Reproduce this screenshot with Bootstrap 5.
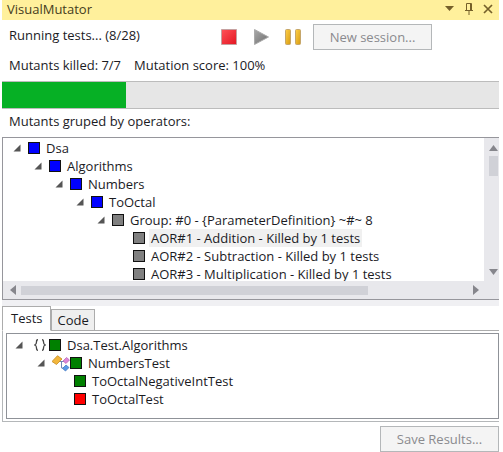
<!DOCTYPE html>
<html lang="en">
<head>
<meta charset="utf-8">
<meta name="viewport" content="width=device-width, initial-scale=1">
<title>VisualMutator</title>
<link rel="stylesheet" href="https://cdn.jsdelivr.net/npm/bootstrap@5.3.0/dist/css/bootstrap.min.css">
<style>
body { font-family: "Open Sans", "Noto Sans", sans-serif; font-size: 13px; line-height: 18px; color: #1b1b1f; background: #fff; }
.tool-window { padding: 0 4px 0 2px; }
.title-strip { background: #fff09c; height: 20px; padding: 0 2px 3px 5px; color: #453c20; }
.title-strip button { width: 19px; height: 17px; }
.toolbar-row { height: 33px; padding: 3px 67px 3px 7px; }
.tool-icons { gap: 16px; margin-right: 12px; }
.push-btn { --bs-btn-font-size: 13px; --bs-btn-line-height: 18px; --bs-btn-padding-y: 3px; --bs-btn-padding-x: 0; --bs-btn-border-radius: 0; --bs-btn-disabled-opacity: 1;
  --bs-btn-disabled-bg: #f4f4f4; --bs-btn-disabled-border-color: #b4b7b9; --bs-btn-disabled-color: #8a8a8e; width: 119px; }
.stats-row { height: 28px; padding: 2px 7px 6px; gap: 13px; }
.kill-bar { --bs-progress-height: 28px; --bs-progress-bg: #e6e6e6; --bs-progress-border-radius: 0; --bs-progress-bar-bg: #06b025; border: solid #bcbcbc; border-width: 1px 0; }
.tree-label { padding: 3px 7px 7px; }
.tree-frame { border: solid #96969c; border-width: 1px 0 1px 1px; }
.tree-view { height: 143px; padding: 1px 0 0 10px; }
.tree-view ul { padding-left: 21px; }
.node { height: 18px; white-space: nowrap; }
.expander { width: 8px; height: 8px; margin-right: 7px; flex: none; }
.leaf { padding-left: 15px; }
.state { width: 12px; height: 12px; border: 1px solid #111; flex: none; margin-right: 4px; }
.state-blue { background: #00f; } .state-gray { background: #808080; }
.state-green { background: #008000; } .state-red { background: #f00; }
.caption { padding: 0 2px; }
.caption-current { background: #f0f0f0; }
.vscroll { width: 15px; background: #e8e8ec; padding: 7px 1px 6px 5px; }
.vscroll-thumb { width: 9px; height: 20px; background: #d0d1d7; margin-top: 5px; }
.hscroll { height: 18px; background: #e8e8ec; padding: 0 20px 0 7px; }
.hscroll-thumb { width: 74%; height: 9px; background: #d0d1d7; margin-left: 5px; }
.split-strip { height: 6px; background: #f0f0f3; }
.result-tabs { --bs-nav-tabs-border-color: #acacac; --bs-nav-tabs-border-radius: 0; --bs-nav-tabs-link-active-border-color: #acacac; --bs-nav-tabs-link-active-color: #1b1b1f; }
.result-tabs .nav-link { padding: 1px 5px; color: #1b1b1f; font-size: 13px; line-height: 18px; border-color: #acacac; background: #efefef; }
.result-tabs .nav-link.active { padding: 2px 8px 3px; background: #fff; border-bottom-color: #fff; }
.tab-frame { border: solid #b4b7b9; border-width: 0 0 1px 1px; padding: 2px 0 2px 3px; }
.test-tree { border: 1px solid #8f9298; padding: 2px 0 10px 8px; }
.test-tree ul { padding-left: 22px; }
.namespace-mark { width: 12px; margin: 0 3px 0 4px; }
.save-row { padding-top: 4px; }
</style>
<script src="https://cdn.jsdelivr.net/npm/bootstrap@5.3.0/dist/js/bootstrap.bundle.min.js"></script>
</head>
<body>
<svg class="d-none" aria-hidden="true">
  <symbol id="open-arrow" viewBox="0 0 8 8"><path d="M7.5.5v7H.5z" fill="#555"/></symbol>
</svg>
<main class="tool-window">
  <header class="title-strip d-flex align-items-center">
    <span class="me-auto">VisualMutator</span>
    <button class="btn p-0 border-0 d-flex align-items-center justify-content-center" aria-label="Window menu"><svg width="9" height="5"><path d="M0 0h9L4.500 5z" fill="#75602a"/></svg></button>
    <button class="btn p-0 border-0 d-flex align-items-center justify-content-center" aria-label="Pin"><svg width="8" height="12" fill="none" stroke="#75602a"><path d="M1.500 7V.5h5V7M0 7.500h8M4 8v4M5.500 1v6"/></svg></button>
    <button class="btn p-0 border-0 d-flex align-items-center justify-content-center" aria-label="Close"><svg width="10" height="10"><path d="M1 1l8 8M9 1L1 9" stroke="#75602a" stroke-width="1.700"/></svg></button>
  </header>

  <div class="toolbar-row d-flex align-items-center">
    <span class="me-auto pb-1">Running tests... (8/28)</span>
    <div class="tool-icons d-flex align-items-center">
      <button class="btn p-0 border-0 d-flex" aria-label="Stop"><svg width="16" height="16"><defs><linearGradient id="rg" x2="1" y2="1"><stop stop-color="#ff5258"/><stop offset="1" stop-color="#e31522"/></linearGradient></defs><path d="M.5.5h15v15H.5z" fill="url(#rg)" stroke="#c5a0a0"/></svg></button>
      <button class="btn p-0 border-0 d-flex" aria-label="Run"><svg width="16" height="16"><defs><linearGradient id="gg" x2="1" y2="1"><stop stop-color="#aaa"/><stop offset="1" stop-color="#6c6c6c"/></linearGradient></defs><path d="M1.500.5L15.500 8 1.500 15.500z" fill="url(#gg)" stroke="#aaa"/></svg></button>
      <button class="btn p-0 border-0 d-flex" aria-label="Pause"><svg width="16" height="16"><defs><linearGradient id="yg" x2="1" y2="1"><stop stop-color="#ffd04a"/><stop offset="1" stop-color="#d69a10"/></linearGradient></defs><g fill="url(#yg)" stroke="#c5a66b"><rect x=".5" y=".5" width="5" height="15" rx="1"/><rect x="10.500" y=".5" width="5" height="15" rx="1"/></g></svg></button>
    </div>
    <button class="btn push-btn" disabled>New session...</button>
  </div>

  <div class="stats-row d-flex align-items-center">
    <span>Mutants killed: 7/7</span><span>Mutation score: 100%</span>
  </div>

  <div class="progress kill-bar" role="progressbar" aria-label="Tests run" aria-valuenow="25" aria-valuemin="0" aria-valuemax="100">
    <div class="progress-bar" style="width:25%"></div>
  </div>

  <div class="tree-label">Mutants gruped by operators:</div>

  <section class="tree-frame" aria-label="Mutants">
    <div class="d-flex">
      <div class="tree-view flex-grow-1 overflow-hidden">
        <div class="node d-flex align-items-center"><svg class="expander"><use href="#open-arrow"/></svg><i class="state state-blue"></i><span class="caption">Dsa</span></div>
        <ul class="list-unstyled mb-0"><li>
          <div class="node d-flex align-items-center"><svg class="expander"><use href="#open-arrow"/></svg><i class="state state-blue"></i><span class="caption">Algorithms</span></div>
          <ul class="list-unstyled"><li>
            <div class="node d-flex align-items-center"><svg class="expander"><use href="#open-arrow"/></svg><i class="state state-blue"></i><span class="caption">Numbers</span></div>
            <ul class="list-unstyled"><li>
              <div class="node d-flex align-items-center"><svg class="expander"><use href="#open-arrow"/></svg><i class="state state-blue"></i><span class="caption">ToOctal</span></div>
              <ul class="list-unstyled"><li>
                <div class="node d-flex align-items-center"><svg class="expander"><use href="#open-arrow"/></svg><i class="state state-gray"></i><span class="caption">Group: #0 - {ParameterDefinition} ~#~ 8</span></div>
                <ul class="list-unstyled">
                  <li class="node leaf d-flex align-items-center"><i class="state state-gray"></i><span class="caption caption-current">AOR#1 - Addition - Killed by 1 tests</span></li>
                  <li class="node leaf d-flex align-items-center"><i class="state state-gray"></i><span class="caption">AOR#2 - Subtraction - Killed by 1 tests</span></li>
                  <li class="node leaf d-flex align-items-center"><i class="state state-gray"></i><span class="caption">AOR#3 - Multiplication - Killed by 1 tests</span></li>
                </ul>
              </li></ul>
            </li></ul>
          </li></ul>
        </li></ul>
      </div>
      <div class="vscroll d-flex flex-column">
        <svg width="9" height="6"><path d="M4.500 0L9 6H0z" fill="#86868c"/></svg>
        <div class="vscroll-thumb"></div>
        <svg class="mt-auto" width="9" height="6"><path d="M0 0h9L4.500 6z" fill="#86868c"/></svg>
      </div>
    </div>
    <div class="hscroll d-flex align-items-center">
      <svg width="6" height="10"><path d="M6 0v10L0 5z" fill="#86868c"/></svg>
      <div class="hscroll-thumb"></div>
      <svg class="ms-auto" width="6" height="10"><path d="M0 0l6 5-6 5z" fill="#86868c"/></svg>
    </div>
  </section>
  <div class="split-strip"></div>

  <ul class="nav nav-tabs result-tabs align-items-end" role="tablist">
    <li class="nav-item" role="presentation"><button class="nav-link active" id="tests-tab" data-bs-toggle="tab" data-bs-target="#tests" role="tab" aria-controls="tests" aria-selected="true">Tests</button></li>
    <li class="nav-item" role="presentation"><button class="nav-link" id="code-tab" data-bs-toggle="tab" data-bs-target="#code" role="tab" aria-controls="code" aria-selected="false">Code</button></li>
  </ul>
  <div class="tab-content tab-frame">
    <div class="tab-pane active" id="tests" role="tabpanel" aria-labelledby="tests-tab">
      <div class="test-tree">
        <div class="node d-flex align-items-center"><svg class="expander"><use href="#open-arrow"/></svg><svg class="namespace-mark" height="12" viewBox="0 0 12 12" fill="none" stroke="#444" stroke-width="1.300"><path d="M4 .7C2.500.7 2.500 1.500 2.500 3S2.500 5.500.8 6c1.700.5 1.700 1.500 1.700 3s0 2.300 1.500 2.300M8 .7c1.500 0 1.500.8 1.500 2.300s0 2.500 1.700 3C9.500 6.500 9.500 7.500 9.500 9s0 2.300-1.500 2.300"/></svg><i class="state state-green"></i><span class="caption">Dsa.Test.Algorithms</span></div>
        <ul class="list-unstyled mb-0"><li>
          <div class="node d-flex align-items-center"><svg class="expander"><use href="#open-arrow"/></svg><svg width="18" height="17" viewBox="0 0 18 17"><path d="M7 6.500h5M9.500 6.500v6.500h4" fill="none" stroke="#7088b8"/><path d="M0 6.500L5.500.7 10 4 4.500 9.500z" fill="#f2b63c" stroke="#c58a20" stroke-width=".8"/><path d="M11 6l3.500-3.500L17.500 5 14 8.500z" fill="#dc86d8" stroke="#b360b3" stroke-width=".7"/><path d="M10.500 13.500L14 10l3 2.500-3.500 3.500z" fill="#5a9ae8" stroke="#3c72bd" stroke-width=".7"/></svg><i class="state state-green"></i><span class="caption">NumbersTest</span></div>
          <ul class="list-unstyled mb-0">
            <li class="node leaf d-flex align-items-center"><i class="state state-green"></i><span class="caption">ToOctalNegativeIntTest</span></li>
            <li class="node leaf d-flex align-items-center"><i class="state state-red"></i><span class="caption">ToOctalTest</span></li>
          </ul>
        </li></ul>
      </div>
    </div>
    <div class="tab-pane" id="code" role="tabpanel" aria-labelledby="code-tab"></div>
  </div>

  <div class="save-row d-flex justify-content-end">
    <button class="btn push-btn" disabled>Save Results...</button>
  </div>
</main>
</body>
</html>
